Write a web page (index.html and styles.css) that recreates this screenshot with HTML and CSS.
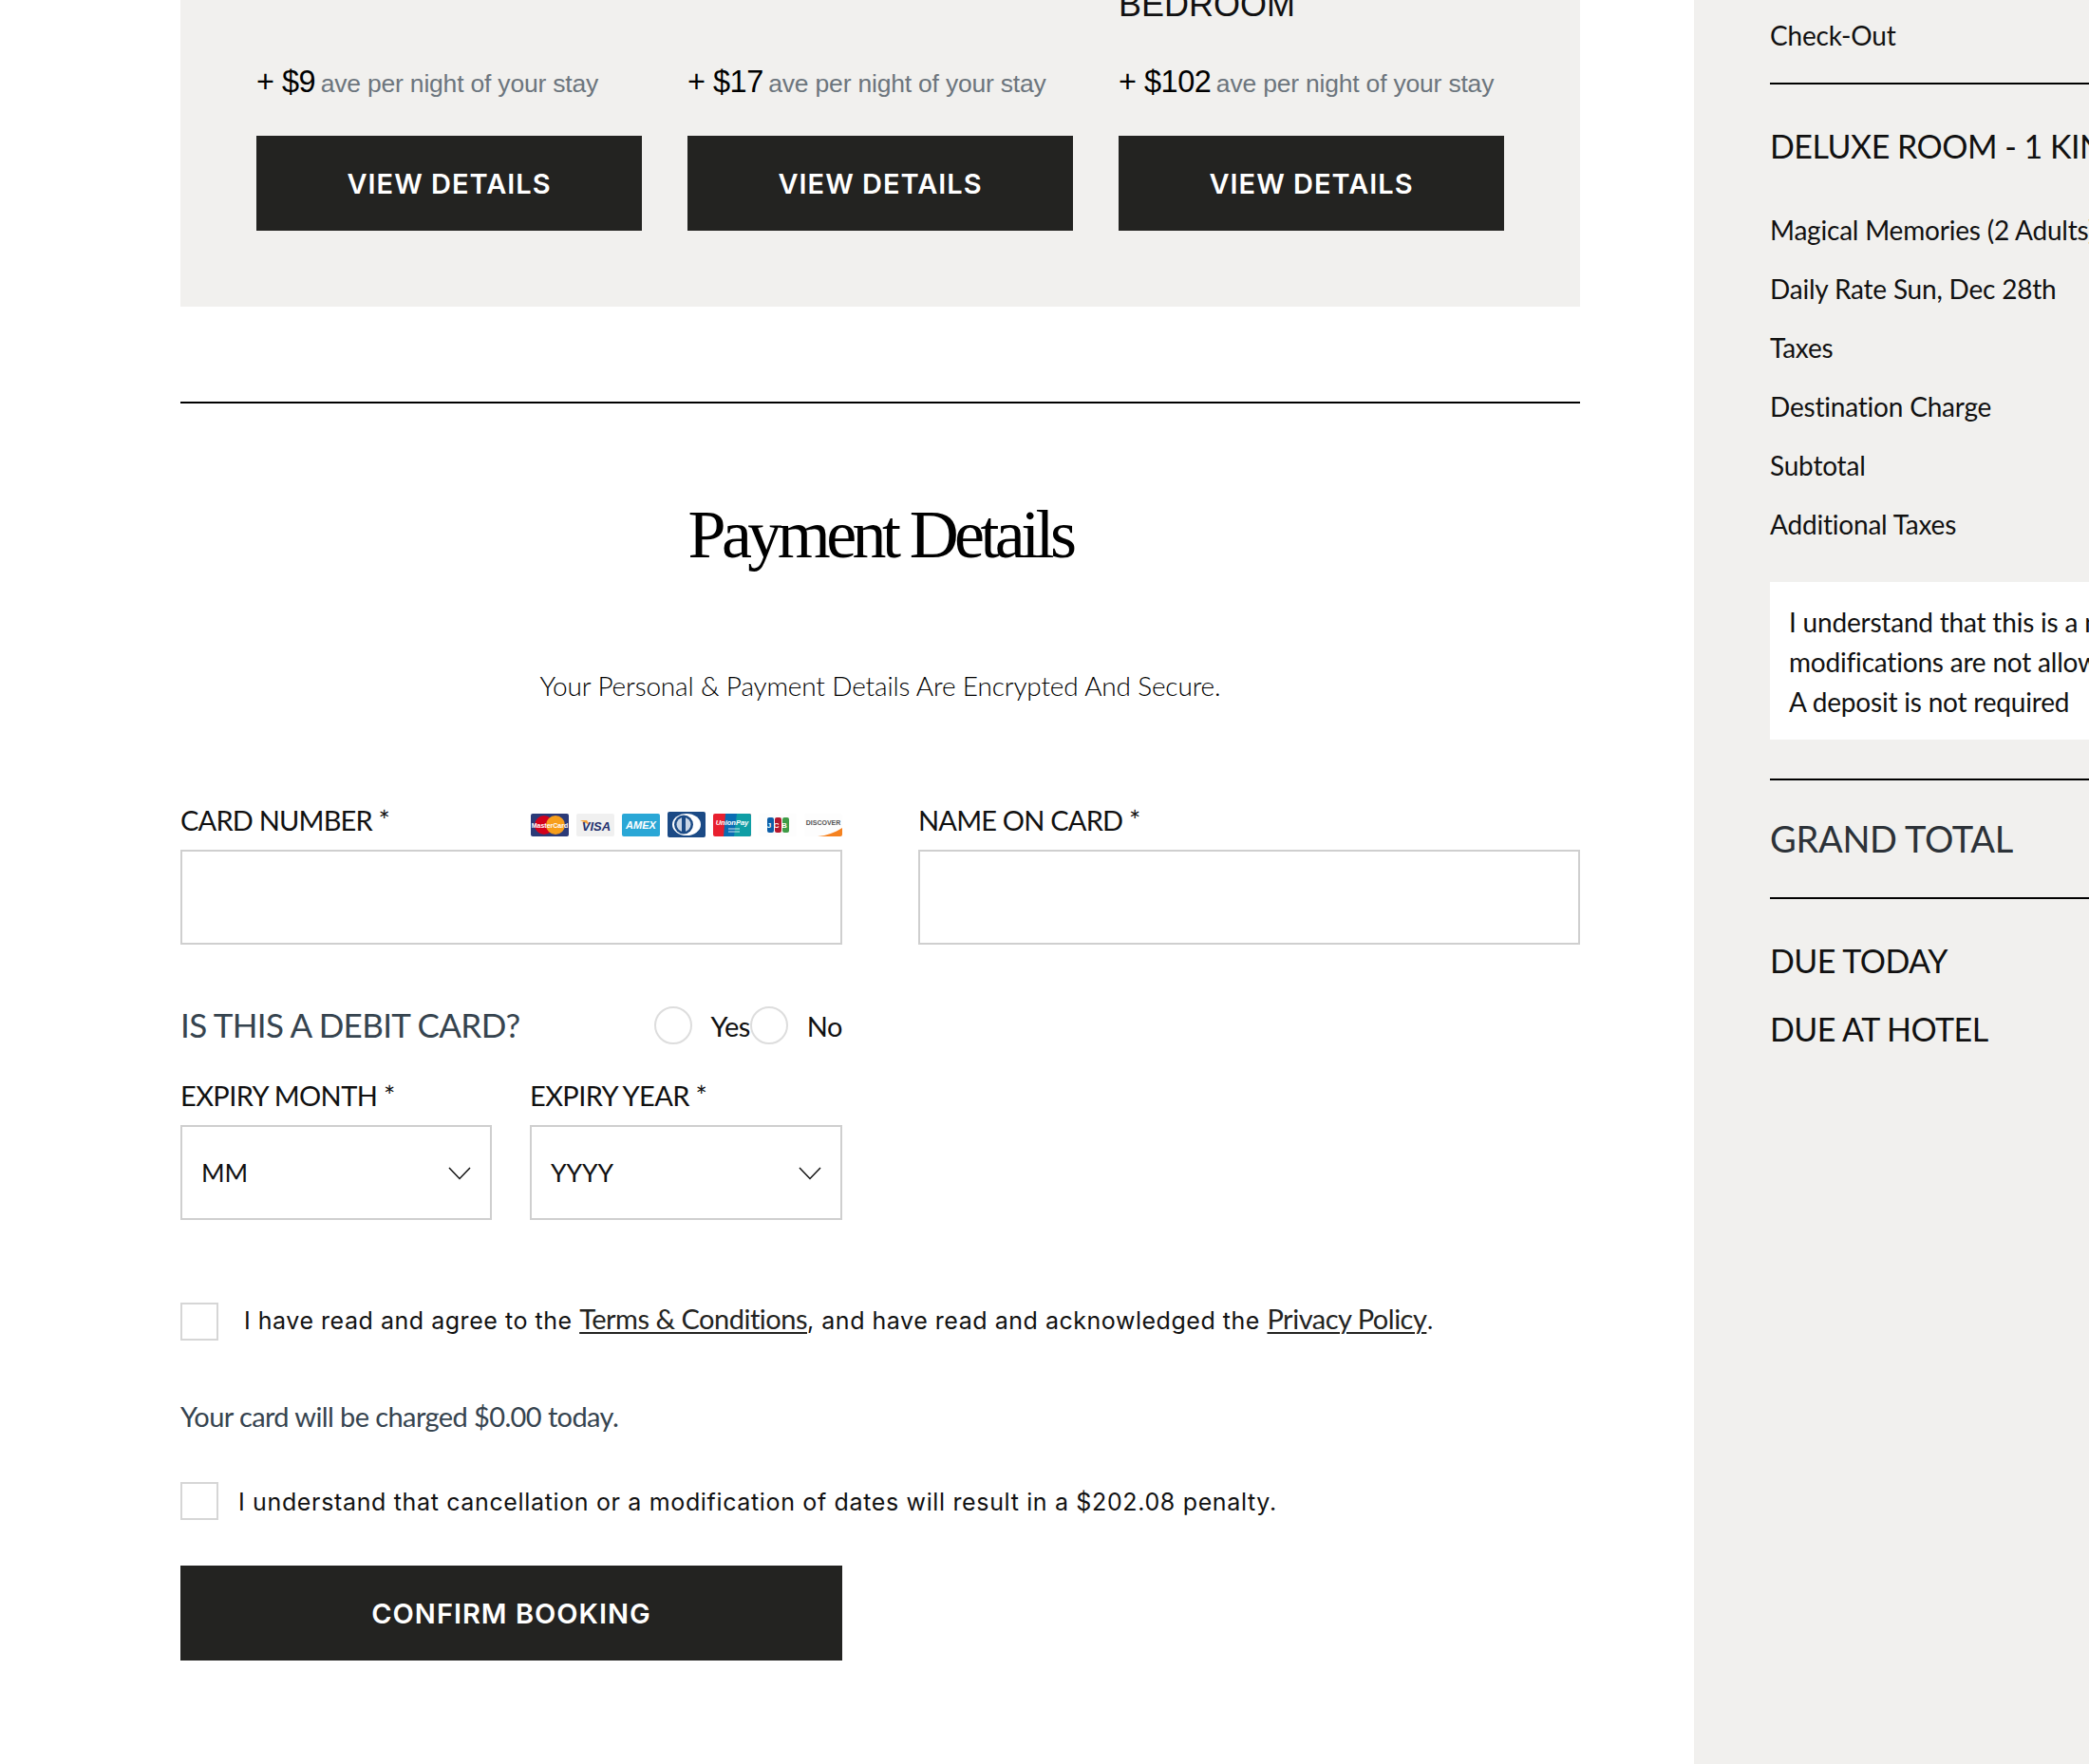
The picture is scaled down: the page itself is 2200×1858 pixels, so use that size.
FILE: index.html
```html
<!DOCTYPE html>
<html lang="en">
<head>
    <meta charset="UTF-8">
    <meta name="viewport" content="width=device-width, initial-scale=1.0">
    <title>Payment Details</title>
    <link rel="stylesheet" href="styles.css">
</head>
<body>
    <div class="page">
        <main class="main">
            <section class="upgrades">
                <div class="upgrade">
                    <p class="price">+ $9 <span>ave per night of your stay</span></p>
                    <a class="btn" href="#">VIEW DETAILS</a>
                </div>
                <div class="upgrade">
                    <p class="price">+ $17 <span>ave per night of your stay</span></p>
                    <a class="btn" href="#">VIEW DETAILS</a>
                </div>
                <div class="upgrade">
                    <h3 class="upgrade-title">BEDROOM</h3>
                    <p class="price">+ $102 <span>ave per night of your stay</span></p>
                    <a class="btn" href="#">VIEW DETAILS</a>
                </div>
            </section>

            <hr class="rule">

            <h1 class="title">Payment Details</h1>
            <p class="secure">Your Personal &amp; Payment Details Are Encrypted And Secure.</p>

            <div class="card-row">
                <div class="field">
                    <div class="card-label">
                        <label>CARD NUMBER *</label>
                        <div class="cards">
                            <svg class="card" viewBox="0 0 40 24"><rect width="40" height="24" rx="2" fill="#2b3a78"/><circle cx="14" cy="12" r="10" fill="#d3001b"/><circle cx="26" cy="12" r="10" fill="#f79e1b"/><text class="card-text" x="20" y="14.500" text-anchor="middle" font-size="7" font-weight="700" fill="#fff">MasterCard</text></svg>
                            <svg class="card" viewBox="0 0 40 24"><rect width="40" height="24" rx="2" fill="#f0f0f0"/><path d="M4 7h7l3 5z" fill="#f4a13a"/><text class="card-text" x="21" y="17.500" text-anchor="middle" font-size="13" font-weight="700" font-style="italic" fill="#24306e">VISA</text></svg>
                            <svg class="card" viewBox="0 0 40 24"><rect width="40" height="24" rx="2" fill="#2aa7d6"/><text class="card-text" x="20" y="16" text-anchor="middle" font-size="11" font-weight="700" font-style="italic" fill="#fff">AMEX</text></svg>
                            <svg class="card card-tall" viewBox="0 0 40 27"><rect width="40" height="27" rx="2" fill="#1b4a85"/><ellipse cx="20" cy="13.500" rx="15" ry="11.500" fill="#fff"/><circle cx="17" cy="13.500" r="10" fill="#1b4a85"/><circle cx="17" cy="13.500" r="7.500" fill="#c9d6e6"/><rect x="15" y="5" width="4" height="17" fill="#1b4a85"/></svg>
                            <svg class="card" viewBox="0 0 40 24"><rect width="40" height="24" rx="2" fill="#e8202f"/><path d="M13 0h14l-4 24H11z" fill="#0a6db3"/><path d="M25 0h13a2 2 0 0 1 2 2v20a2 2 0 0 1-2 2H22z" fill="#0f9ea5"/><text class="card-text" x="20" y="12" text-anchor="middle" font-size="7.500" font-weight="700" font-style="italic" fill="#fff">UnionPay</text><path d="M16 16h12M16 19h12" stroke="#fff" stroke-width="1.200" opacity=".8"/></svg>
                            <svg class="card" viewBox="0 0 40 24"><rect width="40" height="24" rx="2" fill="#fdfdfd"/><rect x="9" y="4" width="7" height="16" rx="2" fill="#0d5fa8"/><rect x="17" y="4" width="7" height="16" rx="2" fill="#b5182f"/><rect x="25" y="4" width="7" height="16" rx="2" fill="#3f9b47"/><text class="card-text" x="20.500" y="15" text-anchor="middle" font-size="8" font-weight="700" letter-spacing="2.500" fill="#fff">JCB</text></svg>
                            <svg class="card" viewBox="0 0 40 24"><rect width="40" height="24" rx="2" fill="#fdfdfd"/><path d="M14 24c10-1 18-4 26-9v7a2 2 0 0 1-2 2z" fill="#f58220"/><text class="card-text" x="20" y="12" text-anchor="middle" font-size="7" font-weight="700" fill="#555">DISCOVER</text></svg>
                        </div>
                    </div>
                    <div class="input"></div>
                </div>
                <div class="field">
                    <div class="card-label">
                        <label>NAME ON CARD *</label>
                    </div>
                    <div class="input"></div>
                </div>
            </div>

            <div class="narrow">
                <div class="debit">
                    <span class="debit-q">IS THIS A DEBIT CARD?</span>
                    <div class="radios">
                        <span class="radio"></span><span class="radio-text">Yes</span>
                        <span class="radio"></span><span class="radio-text">No</span>
                    </div>
                </div>

                <div class="expiry">
                    <div class="field">
                        <label>EXPIRY MONTH *</label>
                        <div class="input select">
                            <span>MM</span>
                            <svg class="chevron" viewBox="0 0 24 14"><path d="M1 1l11 11.500L23 1" fill="none" stroke="#111" stroke-width="1.500"/></svg>
                        </div>
                    </div>
                    <div class="field">
                        <label>EXPIRY YEAR *</label>
                        <div class="input select">
                            <span>YYYY</span>
                            <svg class="chevron" viewBox="0 0 24 14"><path d="M1 1l11 11.500L23 1" fill="none" stroke="#111" stroke-width="1.500"/></svg>
                        </div>
                    </div>
                </div>
            </div>

            <div class="check check-terms">
                <span class="box"></span>
                <p>I have read and agree to the <a href="#">Terms &amp; Conditions</a>, and have read and acknowledged the <a href="#">Privacy Policy</a>.</p>
            </div>

            <p class="charged">Your card will be charged $0.00 today.</p>

            <div class="check check-penalty">
                <span class="box"></span>
                <p>I understand that cancellation or a modification of dates will result in a $202.08 penalty.</p>
            </div>

            <a class="btn btn-confirm" href="#">CONFIRM BOOKING</a>
        </main>

        <aside class="summary">
            <p class="row row-first">Check-Out</p>
            <hr class="rule side-rule">
            <h2 class="room">DELUXE ROOM - 1 KING BED</h2>
            <p class="row">Magical Memories (2 Adults)</p>
            <p class="row">Daily Rate Sun, Dec 28th</p>
            <p class="row">Taxes</p>
            <p class="row">Destination Charge</p>
            <p class="row">Subtotal</p>
            <p class="row">Additional Taxes</p>
            <div class="notice">
                <p>I understand that this is a non-refundable rate and</p>
                <p>modifications are not allowed.</p>
                <p>A deposit is not required</p>
            </div>
            <hr class="rule side-rule rule-total">
            <h2 class="grand">GRAND TOTAL</h2>
            <hr class="rule side-rule">
            <p class="due due-first">DUE TODAY</p>
            <p class="due">DUE AT HOTEL</p>
        </aside>
    </div>
</body>
</html>
```
FILE: styles.css
```css
/* Page frame: the shot starts part way down the booking page */
html, body {
    margin: 0;
    height: 100%;
    overflow: hidden;
}
body {
    font-family: Lato, "Open Sans", sans-serif;
    background-color: #ffffff;
    color: #111;
}
p, h1, h2, h3 {
    margin: 0;
    font-weight: 400;
}
a {
    color: inherit;
}
.page {
    display: flex;
    height: 1858px;
    padding-left: 190px;
}
.main {
    width: 1474px;
    flex-shrink: 0;
}
.summary {
    width: 700px;
    flex-shrink: 0;
    margin-left: 120px;
    padding-left: 80px;
    background-color: #f1f0ee;
}

/* Upgrade panel */
.upgrades {
    display: flex;
    align-items: flex-end;
    gap: 48px;
    height: 323px;
    padding: 0 80px 80px;
    box-sizing: border-box;
    background-color: #f1f0ee;
}
.upgrade {
    width: 406px;
}
.upgrade-title {
    margin-bottom: 46px;
    font-family: "Liberation Sans", Arial, sans-serif;
    font-size: 36px;
    line-height: 32px;
}
.price {
    margin-bottom: 37px;
    padding-top: 1px;
    font-family: "Liberation Sans", Arial, sans-serif;
    font-size: 32.500px;
    line-height: 36px;
    letter-spacing: -0.5px;
    color: #000;
}
.price span {
    margin-left: -3px;
    font-size: 26.500px;
    letter-spacing: -0.2px;
    color: #6c757d;
}
.btn {
    display: block;
    height: 100px;
    line-height: 101px;
    text-align: center;
    background-color: #232321;
    color: #fff;
    font-family: Inter, "Open Sans", sans-serif;
    font-size: 29px;
    font-weight: 600;
    letter-spacing: 1px;
    text-decoration: none;
}

.rule {
    height: 2px;
    margin: 0;
    border: none;
    background-color: #000;
}
.main > .rule {
    margin-top: 100px;
}

/* Heading */
.title {
    margin-top: 98px;
    text-align: center;
    font-family: "Liberation Serif", serif;
    font-size: 72px;
    line-height: 80px;
    letter-spacing: -4.600px;
    color: #000;
}
.secure {
    margin-top: 99px;
    text-align: center;
    font-size: 28px;
    font-weight: 300;
    line-height: 40px;
    letter-spacing: -0.15px;
    color: #000;
}

/* Form */
.card-row {
    display: flex;
    gap: 80px;
    margin-top: 103px;
}
.card-row .field {
    width: 697px;
}
.card-label {
    display: flex;
    justify-content: space-between;
    align-items: flex-start;
    height: 40px;
    margin-bottom: 10px;
}
label {
    font-size: 29px;
    line-height: 38px;
    letter-spacing: -0.8px;
    color: #111;
}
.cards {
    display: flex;
    align-items: center;
    gap: 8px;
    align-self: flex-end;
    margin-bottom: 3px;
}
.card {
    display: block;
    width: 40px;
    height: 24px;
}
.card-tall {
    height: 27px;
}
.card-text {
    font-family: "Liberation Sans", Arial, sans-serif;
}
.input {
    height: 100px;
    box-sizing: border-box;
    border: 2px solid #cfcfcf;
}
.narrow {
    width: 697px;
}
.debit {
    display: flex;
    justify-content: space-between;
    align-items: center;
    height: 60px;
    margin-top: 55px;
}
.debit-q {
    margin-bottom: 2px;
    font-size: 35px;
    line-height: 58px;
    letter-spacing: -0.65px;
    color: #36444f;
}
.radios {
    display: flex;
    align-items: center;
}
.radio {
    width: 40px;
    height: 40px;
    box-sizing: border-box;
    border: 2px solid #ddd;
    border-radius: 50%;
}
.radio-text {
    margin-left: 20px;
    font-size: 29px;
    letter-spacing: -0.5px;
}
.expiry {
    display: grid;
    grid-template-columns: 328px 329px;
    gap: 40px;
    margin-top: 25px;
}
.expiry label {
    display: block;
    margin-bottom: 12px;
    letter-spacing: -0.6px;
}
.select {
    display: flex;
    justify-content: space-between;
    align-items: center;
    padding: 0 20px;
    font-size: 26.500px;
}
.chevron {
    width: 24px;
    height: 14px;
    margin-top: 2px;
}

/* Checkboxes */
.check {
    display: flex;
    align-items: flex-start;
}
.check-terms {
    margin-top: 87px;
}
.check-penalty {
    margin-top: 49px;
}
.box {
    flex-shrink: 0;
    width: 40px;
    height: 40px;
    box-sizing: border-box;
    border: 2px solid #d6d6d6;
}
.check p {
    font-family: Inter, Lato, sans-serif;
    font-size: 25px;
    line-height: 34px;
    letter-spacing: 0.53px;
    color: #111;
}
.check-terms p {
    margin-left: 27px;
}
.check-penalty p {
    margin-left: 21px;
    margin-top: 4px;
    letter-spacing: 0.65px;
}
.check a {
    font-family: Lato, sans-serif;
    font-size: 29px;
    letter-spacing: -0.5px;
    color: #232321;
    text-decoration-thickness: 2px;
    text-underline-offset: 3px;
}
.charged {
    margin-top: 60px;
    font-size: 29px;
    line-height: 40px;
    letter-spacing: -0.6px;
    color: #36444f;
}
.btn-confirm {
    width: 697px;
    margin-top: 48px;
}

/* Order summary */
.summary .row {
    font-size: 28px;
    line-height: 40px;
    letter-spacing: -0.2px;
    margin-bottom: 22px;
    color: #111;
    white-space: nowrap;
}
.summary .row-first {
    margin: 17px 0 30px;
}
.room {
    margin: 41px 0 44px;
    font-size: 34px;
    line-height: 48px;
    letter-spacing: -0.5px;
    white-space: nowrap;
}
.notice {
    margin-top: 41px;
    padding: 21px 20px 0;
    height: 166px;
    box-sizing: border-box;
    background-color: #fff;
    font-size: 28px;
    line-height: 42px;
    letter-spacing: -0.2px;
    white-space: nowrap;
}
.rule-total {
    margin-top: 41px;
}
.grand {
    margin: 37px 0 38px;
    font-size: 38px;
    line-height: 48px;
    letter-spacing: -0.3px;
    color: #2c3238;
}
.due {
    font-size: 34px;
    line-height: 48px;
    letter-spacing: -0.5px;
    margin-top: 24px;
}
.due-first {
    margin-top: 41px;
}
```
